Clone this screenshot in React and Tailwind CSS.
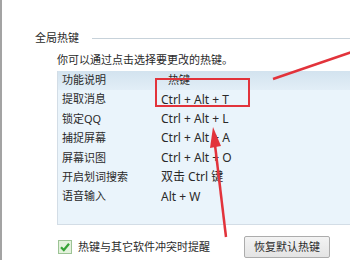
import React from 'react';

const rows = [
  ['提取消息', 'Ctrl + Alt + T'],
  ['锁定QQ', 'Ctrl + Alt + L'],
  ['捕捉屏幕', 'Ctrl + Alt + A'],
  ['屏幕识图', 'Ctrl + Alt + O'],
  ['开启划词搜索', '双击 Ctrl 键'],
  ['语音输入', 'Alt + W'],
];

const font = { fontFamily: '"Noto Sans", "Noto Sans CJK SC", sans-serif' };

export default function App() {
  return (
    <div
      className="relative w-[350px] h-[260px] overflow-hidden bg-white border-l-2 border-[#a3a3a3] text-[11px] text-[#2a2a2a] pl-[33px] pt-[30px]"
      style={font}
    >
      {/* GROUP TITLE */}
      <div className="flex items-center h-[16px]">
        <span className="leading-[16px]">全局热键</span>
        <div className="flex-1 h-px bg-[#c7d2da] ml-[13px]"></div>
      </div>

      {/* HINT */}
      <div className="ml-[22px] mt-[6px] leading-[16px]">你可以通过点击选择要更改的热键。</div>

      {/* TABLE */}
      <div className="ml-[22px] mt-[3px] h-[154px] bg-[#eaf4fb] border-l border-b border-[#d3dde6]">
        <div className="flex items-center h-[19px] bg-gradient-to-b from-[#d3e3ef] to-[#e2eef7]">
          <span className="w-[103px] pl-[4px]">功能说明</span>
          <span className="pl-[7px]">热键</span>
        </div>
        {rows.map(([label, key]) => (
          <div key={label} className="flex items-center h-[19.4px]">
            <span className="w-[103px] pl-[4px]">{label}</span>
            <span className="text-[12px]">{key}</span>
          </div>
        ))}
      </div>

      {/* FOOTER */}
      <div className="flex items-center mt-[11px] h-[22px]">
        <div className="ml-[23px] w-[14px] h-[14px]">
          <svg width="14" height="14" viewBox="0 0 14 14">
            <rect x="0.5" y="0.5" width="13" height="13" fill="#e3f2dc" stroke="#9cc395" />
            <path d="M3 7.2 L5.8 10 L11 3.8" fill="none" stroke="#36a336" strokeWidth="2.2" />
          </svg>
        </div>
        <span className="ml-[6px]">热键与其它软件冲突时提醒</span>
        <button className="ml-[34px] w-[86px] h-[22px] border border-[#acacac] rounded-[2px] bg-gradient-to-b from-[#f3f3f3] to-[#e4e4e4] text-[11px] text-[#2a2a2a]">
          恢复默认热键
        </button>
      </div>

      {/* ANNOTATIONS */}
      <svg className="absolute left-[-2px] top-0 pointer-events-none" width="350" height="260" viewBox="0 0 350 260">
        <rect x="156" y="79" width="93" height="27" fill="none" stroke="#e2333b" strokeWidth="2" />
        <line x1="273" y1="79" x2="352" y2="52" stroke="#e2333b" strokeWidth="2.5" />
        <line x1="226" y1="237" x2="215" y2="145" stroke="#e2333b" strokeWidth="2.5" />
        <polygon points="213,127 210,148 221,146" fill="#e2333b" />
      </svg>
    </div>
  );
}
